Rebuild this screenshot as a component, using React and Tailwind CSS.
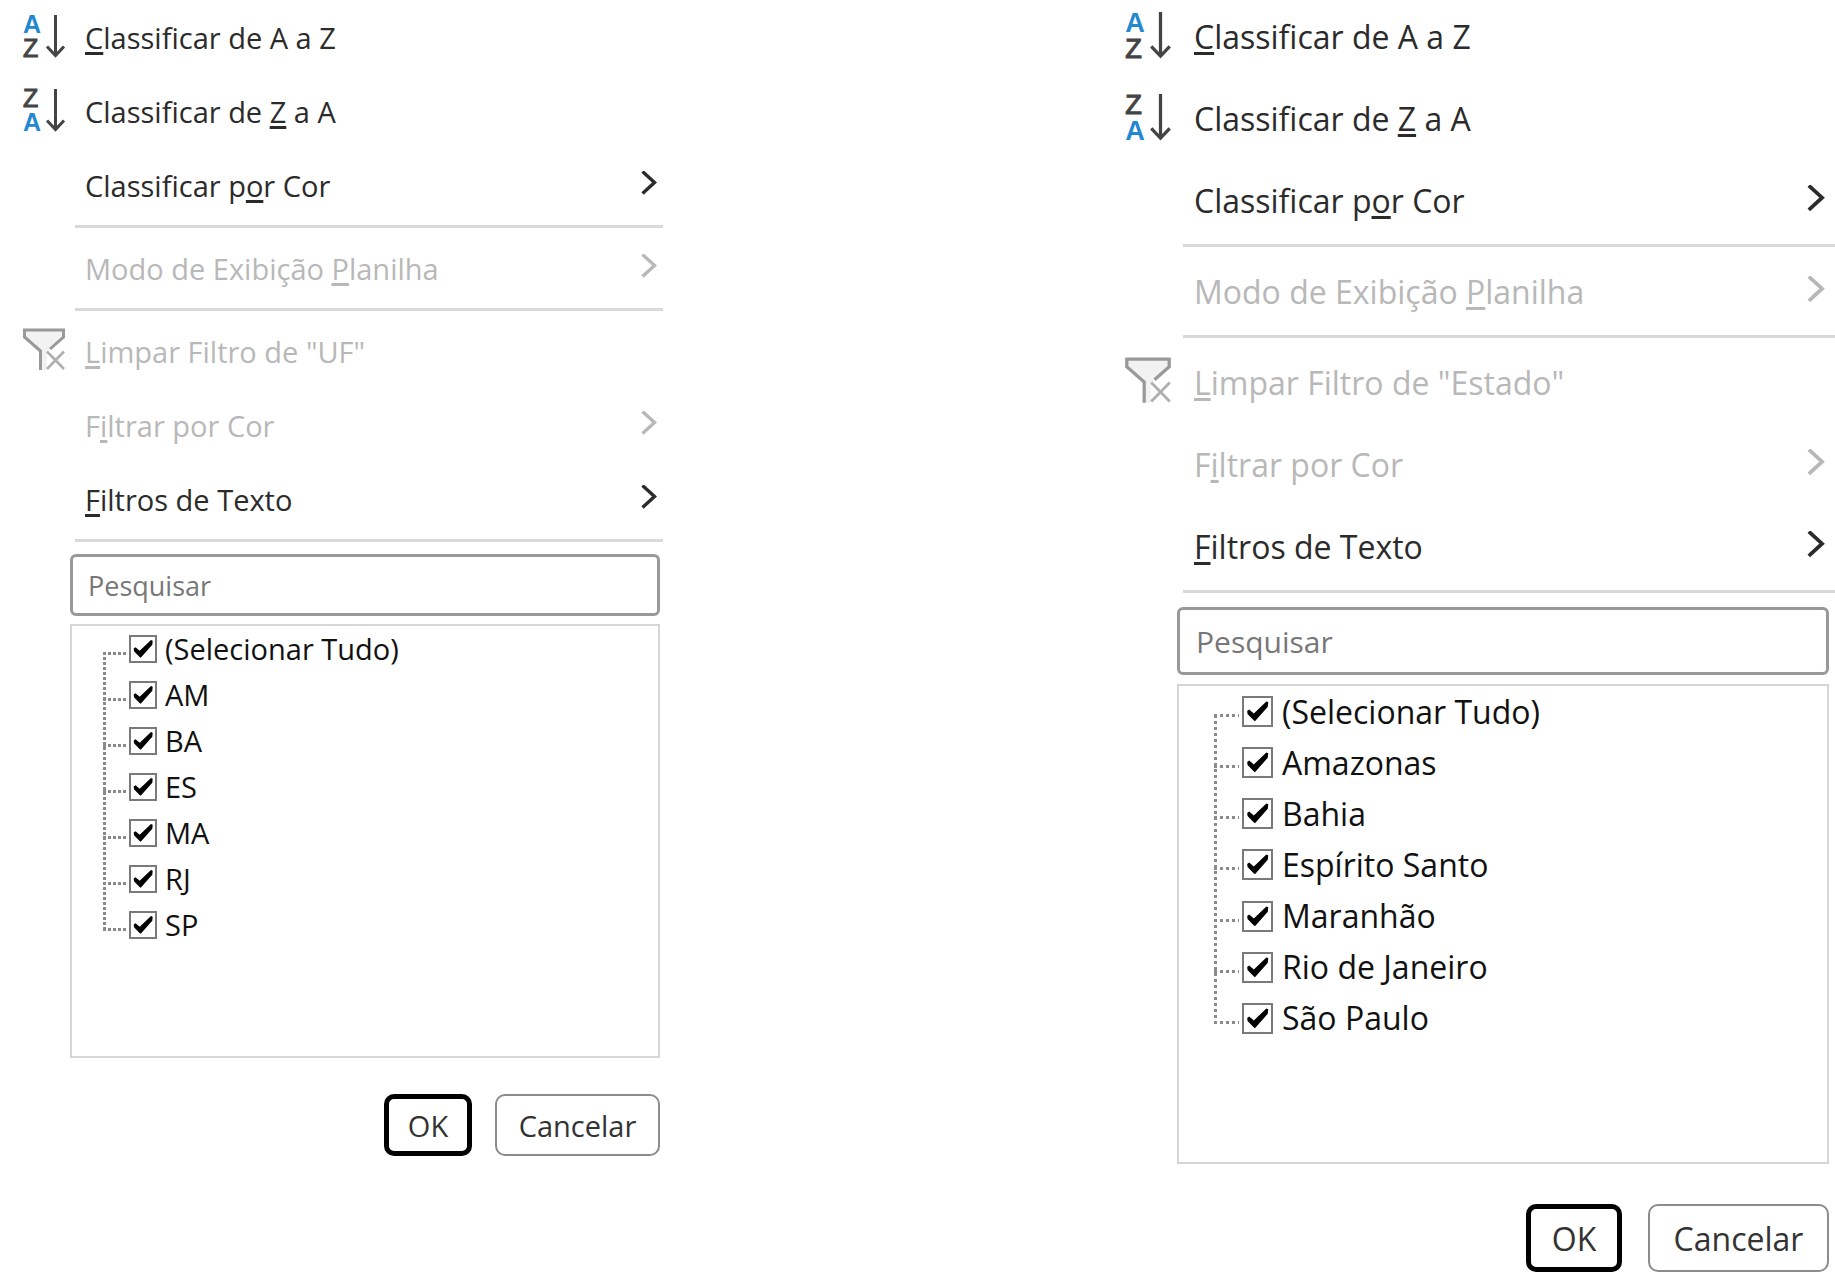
import { useState } from "react";

const SIZES = {
  md: {
    row: "h-[74px] gap-5 pl-[23px] pr-[5px] text-[29px]",
    icon: "h-[46px] w-[42px]",
    chevron: "h-7 w-[18px]",
    divider: "ml-[75px] h-[9px]",
    form: "ml-[70px] mr-[3px]",
    search: "mt-[9px] h-[62px] px-[15px] text-[27px]",
    list: "mt-2 h-[434px] pl-[31px]",
    tree: "h-[322px]",
    trunk: "top-[26px] bottom-[18px] w-[3px] bg-[repeating-linear-gradient(to_bottom,#8a8a8a_0_3px,transparent_3px_5px)]",
    branch: "mt-2 mr-[3px] h-[3px] w-[23px] bg-[repeating-linear-gradient(to_right,#8a8a8a_0_3px,transparent_3px_5px)]",
    item: "text-[29px]",
    box: "size-7",
    label: "pl-2",
    actions: "mt-9 gap-[23px] text-[29px]",
    ok: "h-[62px] w-[88px]",
    cancel: "h-[62px] w-[165px]",
  },
  lg: {
    row: "h-[82px] gap-[23px] pl-[25px] pr-[9px] text-[32px]",
    icon: "h-[50px] w-[46px]",
    chevron: "h-[31px] w-5",
    divider: "ml-[83px] h-[9px]",
    form: "ml-[77px] mr-[6px]",
    search: "mt-[11px] h-[68px] px-4 text-[30px]",
    list: "mt-[9px] h-[480px] pl-[35px]",
    tree: "h-[358px]",
    trunk: "top-[29px] bottom-[19px] w-[3px] bg-[repeating-linear-gradient(to_bottom,#8a8a8a_0_3px,transparent_3px_6px)]",
    branch: "mt-2 mr-[3px] h-[3px] w-[25px] bg-[repeating-linear-gradient(to_right,#8a8a8a_0_3px,transparent_3px_6px)]",
    item: "text-[32px]",
    box: "size-[31px]",
    label: "pl-[9px]",
    actions: "mt-10 gap-[26px] text-[32px]",
    ok: "h-[68px] w-[96px]",
    cancel: "h-[68px] w-[181px]",
  },
};

function SortLetter({ letter, y }) {
  const accent = letter === "A";
  return (
    <text
      x="0"
      y={y}
      fontSize="25"
      fill={accent ? "#2488d0" : "#444444"}
      stroke={accent ? "none" : "#444444"}
      strokeWidth="1"
      className={accent ? "font-['Liberation_Sans',sans-serif] font-bold" : "font-['Liberation_Sans',sans-serif] font-normal"}
    >
      {letter}
    </text>
  );
}

function SortIcon({ descending, className }) {
  return (
    <svg viewBox="0 0 42 46" className={`overflow-visible ${className}`} aria-hidden="true">
      <SortLetter letter={descending ? "Z" : "A"} y="19" />
      <SortLetter letter={descending ? "A" : "Z"} y="43" />
      <path d="M32.500 1V41M24 32.500l8.500 9 8.500-9" fill="none" stroke="#444444" strokeWidth="3" />
    </svg>
  );
}

function ClearFilterIcon({ className }) {
  return (
    <svg viewBox="0 0 42 46" className={className} aria-hidden="true" fill="none">
      <path d="M2 2h38v7L27 20.500 24 24v18h-7V23L2 9z" fill="#f2f2f2" />
      <path d="M17.500 42V23L1.500 9V2h39v7L27 21" stroke="#999999" strokeWidth="3" />
      <path d="M24 23.500l17 17.500M41 23.500L24 41" stroke="#b0b0b0" strokeWidth="2.600" />
    </svg>
  );
}

function Chevron({ className }) {
  return (
    <svg viewBox="0 0 18 28" className={className} aria-hidden="true">
      <path d="M2.500 0.500L14.500 11.500L2.500 22.500" fill="none" stroke="currentColor" strokeWidth="3.400" />
    </svg>
  );
}

/* An underscore in the label marks the access key that follows it. */
function AccessLabel({ text }) {
  const [before, rest] = text.split("_");
  return (
    <span className="flex-1 whitespace-nowrap pt-0.5 text-left">
      {before}
      <u className="decoration-[3px] underline-offset-[3px] [text-decoration-skip-ink:none]">{rest[0]}</u>
      {rest.slice(1)}
    </span>
  );
}

function MenuItem({ s, text, icon, submenu, disabled }) {
  return (
    <button
      type="button"
      disabled={disabled}
      className={`flex w-full items-center ${s.row} ${disabled ? "text-[#b8b8b8]" : "text-[#2b2b2b]"}`}
    >
      <span className={`flex-none ${s.icon}`}>{icon}</span>
      <AccessLabel text={text} />
      {submenu && <Chevron className={`flex-none ${s.chevron}`} />}
    </button>
  );
}

function Divider({ s }) {
  return (
    <div role="separator" className={`flex items-center ${s.divider}`}>
      <div className="h-[3px] w-full bg-[#d9d9d9]" />
    </div>
  );
}

function CheckItem({ s, label }) {
  const [checked, setChecked] = useState(true);
  return (
    <li className={`flex flex-1 items-center ${s.item}`}>
      <span className={s.branch} />
      <label className="flex items-center whitespace-nowrap text-[#111111]">
        <span className={`grid flex-none ${s.box}`}>
          <input
            type="checkbox"
            checked={checked}
            onChange={() => setChecked(!checked)}
            className="peer col-start-1 row-start-1 size-full appearance-none border-2 border-[#7a7a7a] bg-white"
          />
          <svg viewBox="0 0 28 28" className="pointer-events-none col-start-1 row-start-1 hidden size-full peer-checked:block" aria-hidden="true">
            <path d="M4.700 13.500L6.500 12.300L10.700 15.700L22 5L23.700 5.700L23.300 9.700L11.700 22.700L10.300 21.700L5 16.300Z" fill="#000000" />
          </svg>
        </span>
        <span className={s.label}>{label}</span>
      </label>
    </li>
  );
}

function FilterPanel({ size, column, values, className }) {
  const s = SIZES[size];
  return (
    <section aria-label={column} className={className}>
      <MenuItem s={s} text="_Classificar de A a Z" icon={<SortIcon className="size-full" />} />
      <MenuItem s={s} text="Classificar de _Z a A" icon={<SortIcon descending className="size-full" />} />
      <MenuItem s={s} text="Classificar p_or Cor" submenu />
      <Divider s={s} />
      <MenuItem s={s} text="Modo de Exibição _Planilha" submenu disabled />
      <Divider s={s} />
      <MenuItem s={s} text={`_Limpar Filtro de "${column}"`} icon={<ClearFilterIcon className="size-full" />} disabled />
      <MenuItem s={s} text="F_iltrar por Cor" submenu disabled />
      <MenuItem s={s} text="_Filtros de Texto" submenu />
      <Divider s={s} />
      <form className={s.form} onSubmit={(e) => e.preventDefault()}>
        <input
          type="text"
          aria-label="Pesquisar"
          placeholder="Pesquisar"
          className={`block w-full rounded-md border-3 border-[#999999] bg-white text-[#111111] placeholder:text-[#777777] ${s.search}`}
        />
        <div className={`border-2 border-[#d6d6d6] ${s.list}`}>
          <ul className={`relative flex flex-col ${s.tree}`}>
            <span aria-hidden="true" className={`absolute left-0 ${s.trunk}`} />
            {values.map((value) => (
              <CheckItem key={value} s={s} label={value} />
            ))}
          </ul>
        </div>
        <div className={`flex justify-end text-[#333333] ${s.actions}`}>
          <button type="submit" className={`rounded-[10px] border-5 border-black pt-0.5 ${s.ok}`}>OK</button>
          <button type="button" className={`rounded-[10px] border-2 border-[#8c8c8c] pt-0.5 ${s.cancel}`}>Cancelar</button>
        </div>
      </form>
    </section>
  );
}

export default function App() {
  return (
    <main className="grid grid-cols-[663fr_437fr_735fr] items-start overflow-hidden bg-white font-['Open_Sans','Noto_Sans',sans-serif]">
      <FilterPanel size="md" column="UF" values={["(Selecionar Tudo)", "AM", "BA", "ES", "MA", "RJ", "SP"]} />
      <FilterPanel
        size="lg"
        column="Estado"
        className="col-start-3 -mt-[5px]"
        values={["(Selecionar Tudo)", "Amazonas", "Bahia", "Espírito Santo", "Maranhão", "Rio de Janeiro", "São Paulo"]}
      />
    </main>
  );
}
